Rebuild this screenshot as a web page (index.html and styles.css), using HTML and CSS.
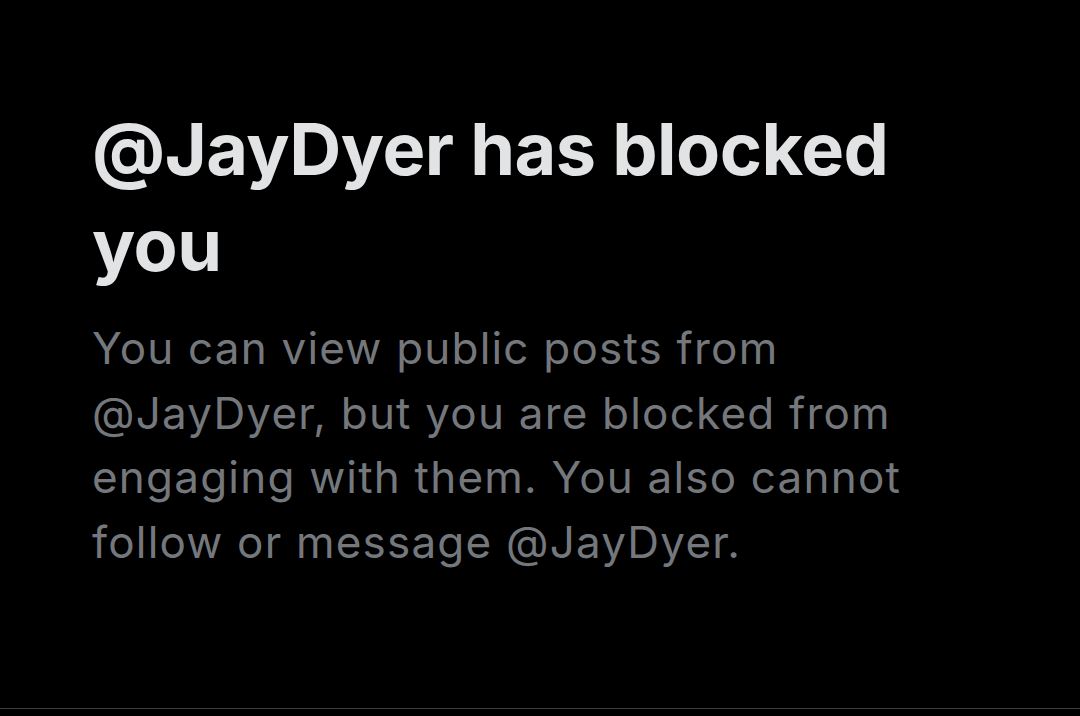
FILE: index.html
```html
<!DOCTYPE html>
<html lang="en">
<head>
<meta charset="utf-8">
<title>Blocked</title>
<link rel="stylesheet" href="styles.css">
</head>
<body>
<main class="screen">
  <section class="blocked">
    <h1 class="blocked-title">@JayDyer has blocked you</h1>
    <p class="blocked-text">You can view public posts from @JayDyer, but you are blocked from engaging with them. You also cannot follow or message @JayDyer.</p>
  </section>
  <div class="divider"></div>
</main>
</body>
</html>
```
FILE: styles.css
```css
html, body {
  margin: 0;
  padding: 0;
  background: #000;
}
.screen {
  width: 1080px;
  height: 716px;
  display: flex;
  flex-direction: column;
  background: #000;
}
.blocked {
  flex: 1;
  padding: 101px 0 0 92px;
  box-sizing: border-box;
}
.blocked-title {
  margin: 0;
  width: 820px;
  font-family: Inter, "Liberation Sans", sans-serif;
  font-weight: 700;
  font-size: 72px;
  letter-spacing: -0.5px;
  line-height: 96px;
  color: #e1e3e4;
}
.blocked-text {
  margin: 23px 0 0;
  width: 860px;
  font-family: Inter, "Liberation Sans", sans-serif;
  font-weight: 400;
  font-size: 44px;
  letter-spacing: 1.2px;
  line-height: 64.5px;
  color: #74787d;
}
.divider {
  height: 1px;
  background: #3a3d40;
  margin-bottom: 7px;
}
```
